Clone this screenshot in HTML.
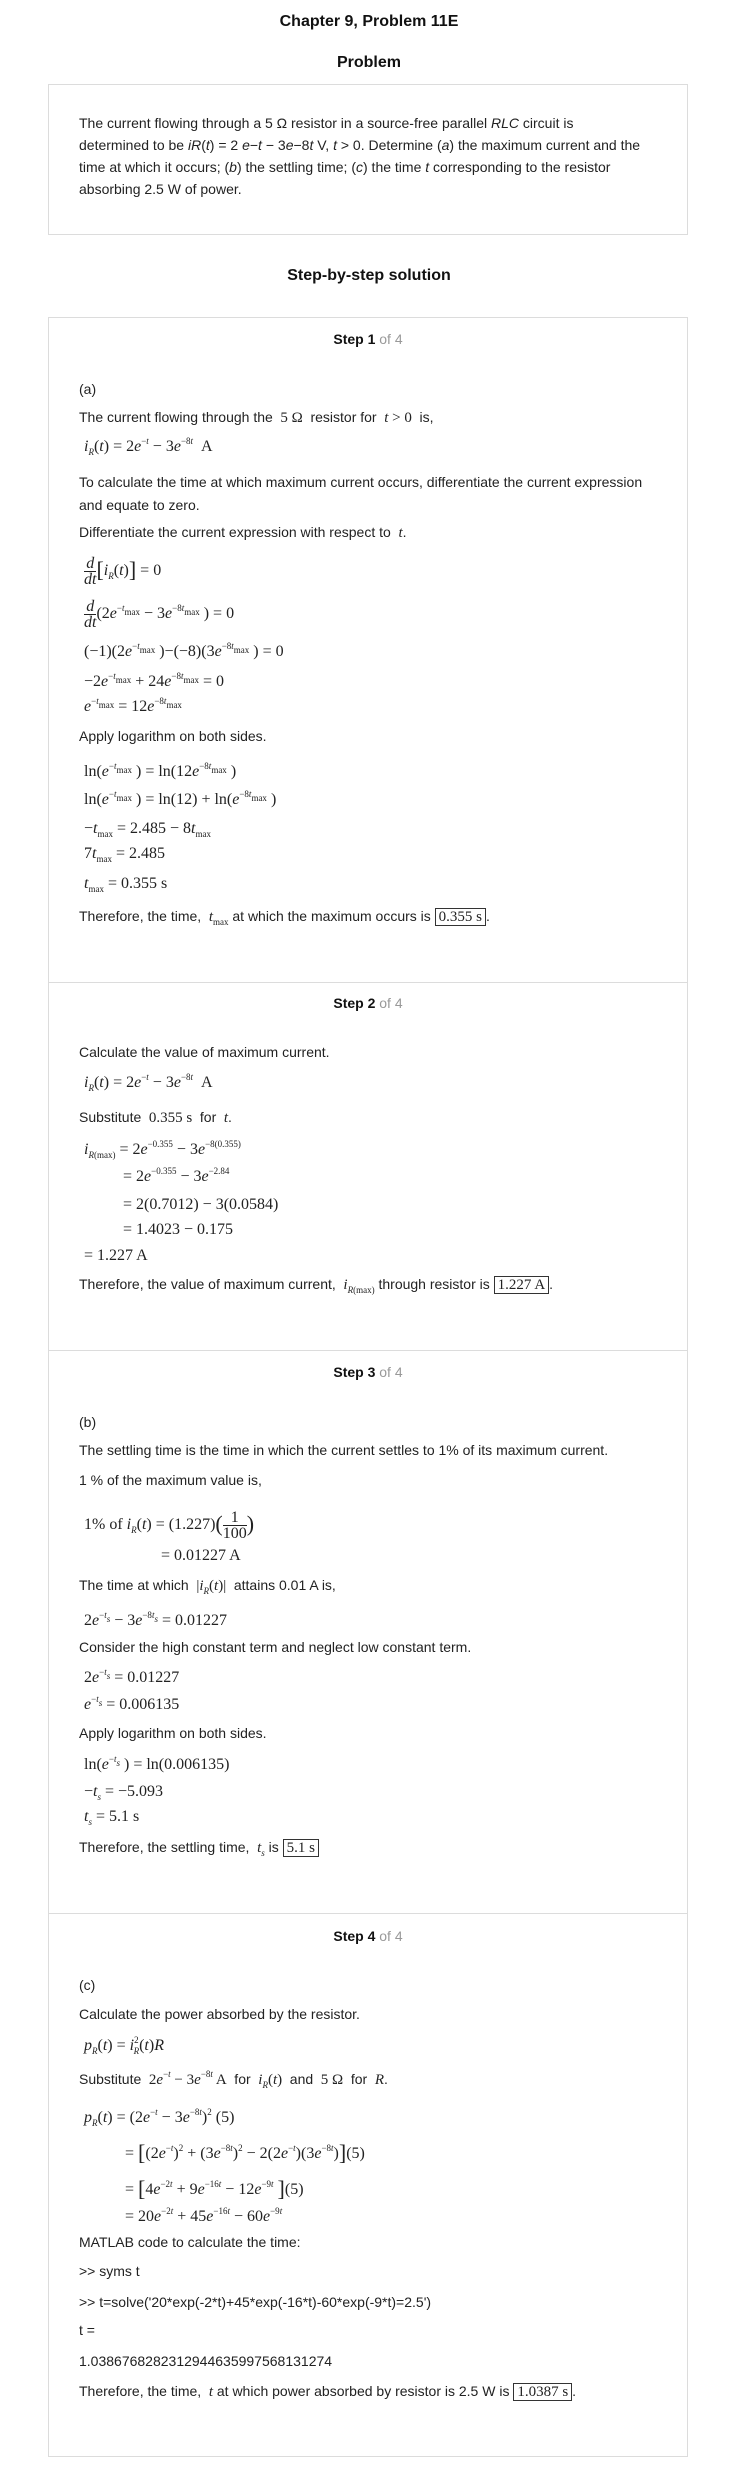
<!DOCTYPE html>
<html><head><meta charset="utf-8">
<style>
*{margin:0;padding:0;box-sizing:border-box}
body{width:738px;height:2483px;background:#fff;position:relative;font-family:"Liberation Sans",Arial,sans-serif;color:#222;overflow:hidden}
.c{position:absolute;left:0;width:738px;text-align:center;font-weight:bold;font-size:16px;line-height:20px;color:#111}
.box{position:absolute;left:48px;width:640px;border:1px solid #dcdcdc}
.l{position:absolute;left:79px;white-space:nowrap;font-size:14px;line-height:20px;color:#222}
.m{position:absolute;left:84px;white-space:nowrap;font-family:"Liberation Serif",serif;font-size:16px;line-height:22px;color:#222}
.s{font-family:"Liberation Serif",serif;font-size:15px}
i{font-style:italic}
sup{font-size:9px;vertical-align:7px;line-height:0}
sub{font-size:9px;vertical-align:-4px;line-height:0}
.fr{display:inline-block;vertical-align:middle;text-align:center;font-style:italic;line-height:15px}
.fr span{display:block}
.fr span.t{border-bottom:1px solid #222}
.bx{border:1px solid #333;padding:0 3px;font-family:"Liberation Serif",serif;font-size:15px}
.st{position:absolute;left:48px;width:640px;text-align:center;font-size:14px;line-height:20px;font-weight:bold;color:#111}
.st span{font-weight:normal;color:#999}
.big{font-size:22px;vertical-align:-2px}
</style></head><body>

<div class="c" style="top:12px">Chapter 9, Problem 11E</div>
<div class="c" style="top:53px">Problem</div>
<div class="box" style="top:84px;height:151px"></div>
<div class="l" style="top:112px;line-height:22px">The current flowing through a 5 Ω resistor in a source-free parallel <i>RLC</i> circuit is<br>determined to be <i>iR</i>(<i>t</i>) = 2 <i>e</i>−<i>t</i> − 3<i>e</i>−8<i>t</i> V, <i>t</i> &gt; 0. Determine (<i>a</i>) the maximum current and the<br>time at which it occurs; (<i>b</i>) the settling time; (<i>c</i>) the time <i>t</i> corresponding to the resistor<br>absorbing 2.5 W of power.</div>

<div class="c" style="top:266px">Step-by-step solution</div>

<!-- Step 1 -->
<div class="box" style="top:317px;height:666px"></div>
<div class="st" style="top:329px">Step 1 <span>of 4</span></div>
<div class="l" style="top:379px">(a)</div>
<div class="l" style="top:407px">The current flowing through the <span class="s">&nbsp;5 Ω&nbsp;</span> resistor for <span class="s"><i>&nbsp;t</i> &gt; 0&nbsp;</span> is,</div>
<div class="m" style="top:436px"><i>i<sub>R</sub></i>(<i>t</i>) = 2<i>e</i><sup>−<i>t</i></sup> − 3<i>e</i><sup>−8<i>t</i></sup> &nbsp;A</div>
<div class="l" style="top:471px;line-height:23px">To calculate the time at which maximum current occurs, differentiate the current expression<br>and equate to zero.</div>
<div class="l" style="top:522px">Differentiate the current expression with respect to <span class="s"><i>&nbsp;t</i></span>.</div>
<div class="m" style="top:556px"><span class="fr"><span class="t">d</span><span>dt</span></span><span class="big">[</span><i>i<sub>R</sub></i>(<i>t</i>)<span class="big">]</span> = 0</div>
<div class="m" style="top:599px"><span class="fr"><span class="t">d</span><span>dt</span></span>(2<i>e</i><sup>−<i>t</i><sub>max</sub></sup> − 3<i>e</i><sup>−8<i>t</i><sub>max</sub></sup> ) = 0</div>
<div class="m" style="top:641px">(−1)(2<i>e</i><sup>−<i>t</i><sub>max</sub></sup> )−(−8)(3<i>e</i><sup>−8<i>t</i><sub>max</sub></sup> ) = 0</div>
<div class="m" style="top:671px">−2<i>e</i><sup>−<i>t</i><sub>max</sub></sup> + 24<i>e</i><sup>−8<i>t</i><sub>max</sub></sup> = 0</div>
<div class="m" style="top:696px"><i>e</i><sup>−<i>t</i><sub>max</sub></sup> = 12<i>e</i><sup>−8<i>t</i><sub>max</sub></sup></div>
<div class="l" style="top:726px">Apply logarithm on both sides.</div>
<div class="m" style="top:761px">ln(<i>e</i><sup>−<i>t</i><sub>max</sub></sup> ) = ln(12<i>e</i><sup>−8<i>t</i><sub>max</sub></sup> )</div>
<div class="m" style="top:789px">ln(<i>e</i><sup>−<i>t</i><sub>max</sub></sup> ) = ln(12) + ln(<i>e</i><sup>−8<i>t</i><sub>max</sub></sup> )</div>
<div class="m" style="top:818px">−<i>t</i><sub>max</sub> = 2.485 − 8<i>t</i><sub>max</sub></div>
<div class="m" style="top:843px">7<i>t</i><sub>max</sub> = 2.485</div>
<div class="m" style="top:873px"><i>t</i><sub>max</sub> = 0.355 s</div>
<div class="l" style="top:906px">Therefore, the time, <span class="s"><i>&nbsp;t</i><sub>max</sub></span> at which the maximum occurs is <span class="bx">0.355 s</span>.</div>

<!-- Step 2 -->
<div class="box" style="top:982px;height:369px"></div>
<div class="st" style="top:993px">Step 2 <span>of 4</span></div>
<div class="l" style="top:1042px">Calculate the value of maximum current.</div>
<div class="m" style="top:1072px"><i>i<sub>R</sub></i>(<i>t</i>) = 2<i>e</i><sup>−<i>t</i></sup> − 3<i>e</i><sup>−8<i>t</i></sup> &nbsp;A</div>
<div class="l" style="top:1107px">Substitute <span class="s">&nbsp;0.355 s&nbsp;</span> for <span class="s"><i>&nbsp;t</i></span>.</div>
<div class="m" style="top:1139px"><i>i</i><sub><i>R</i>(max)</sub> = 2<i>e</i><sup>−0.355</sup> − 3<i>e</i><sup>−8(0.355)</sup></div>
<div class="m" style="top:1166px;left:123px">= 2<i>e</i><sup>−0.355</sup> − 3<i>e</i><sup>−2.84</sup></div>
<div class="m" style="top:1194px;left:123px">= 2(0.7012) − 3(0.0584)</div>
<div class="m" style="top:1219px;left:123px">= 1.4023 − 0.175</div>
<div class="m" style="top:1245px">= 1.227 A</div>
<div class="l" style="top:1274px">Therefore, the value of maximum current, <span class="s"><i>&nbsp;i</i><sub><i>R</i>(max)</sub></span> through resistor is <span class="bx">1.227 A</span>.</div>

<!-- Step 3 -->
<div class="box" style="top:1350px;height:564px"></div>
<div class="st" style="top:1362px">Step 3 <span>of 4</span></div>
<div class="l" style="top:1412px">(b)</div>
<div class="l" style="top:1440px">The settling time is the time in which the current settles to 1% of its maximum current.</div>
<div class="l" style="top:1470px">1 % of the maximum value is,</div>
<div class="m" style="top:1510px">1% of <i>i<sub>R</sub></i>(<i>t</i>) = (1.227)<span class="big">(</span><span class="fr" style="font-style:normal"><span class="t">1</span><span>100</span></span><span class="big">)</span></div>
<div class="m" style="top:1545px;left:161px">= 0.01227 A</div>
<div class="l" style="top:1575px">The time at which <span class="s">&nbsp;|<i>i<sub>R</sub></i>(<i>t</i>)|&nbsp;</span> attains 0.01 A is,</div>
<div class="m" style="top:1610px">2<i>e</i><sup>−<i>t<sub>s</sub></i></sup> − 3<i>e</i><sup>−8<i>t<sub>s</sub></i></sup> = 0.01227</div>
<div class="l" style="top:1637px">Consider the high constant term and neglect low constant term.</div>
<div class="m" style="top:1667px">2<i>e</i><sup>−<i>t<sub>s</sub></i></sup> = 0.01227</div>
<div class="m" style="top:1694px"><i>e</i><sup>−<i>t<sub>s</sub></i></sup> = 0.006135</div>
<div class="l" style="top:1723px">Apply logarithm on both sides.</div>
<div class="m" style="top:1754px">ln(<i>e</i><sup>−<i>t<sub>s</sub></i></sup> ) = ln(0.006135)</div>
<div class="m" style="top:1781px">−<i>t<sub>s</sub></i> = −5.093</div>
<div class="m" style="top:1806px"><i>t<sub>s</sub></i> = 5.1 s</div>
<div class="l" style="top:1837px">Therefore, the settling time, <span class="s"><i>&nbsp;t<sub>s</sub></i></span> is <span class="bx">5.1 s</span></div>

<!-- Step 4 -->
<div class="box" style="top:1913px;height:544px"></div>
<div class="st" style="top:1926px">Step 4 <span>of 4</span></div>
<div class="l" style="top:1975px">(c)</div>
<div class="l" style="top:2004px">Calculate the power absorbed by the resistor.</div>
<div class="m" style="top:2035px"><i>p<sub>R</sub></i>(<i>t</i>) = <i>i</i><sup>2</sup><sub style="margin-left:-5px"><i>R</i></sub>(<i>t</i>)<i>R</i></div>
<div class="l" style="top:2069px">Substitute <span class="s">&nbsp;2<i>e</i><sup>−<i>t</i></sup> − 3<i>e</i><sup>−8<i>t</i></sup> A&nbsp;</span> for <span class="s">&nbsp;<i>i<sub>R</sub></i>(<i>t</i>)&nbsp;</span> and <span class="s">&nbsp;5 Ω&nbsp;</span> for <span class="s"><i>&nbsp;R</i></span>.</div>
<div class="m" style="top:2107px"><i>p<sub>R</sub></i>(<i>t</i>) = (2<i>e</i><sup>−<i>t</i></sup> − 3<i>e</i><sup>−8<i>t</i></sup>)<sup>2</sup> (5)</div>
<div class="m" style="top:2142px;left:125px">= <span class="big">[</span>(2<i>e</i><sup>−<i>t</i></sup>)<sup>2</sup> + (3<i>e</i><sup>−8<i>t</i></sup>)<sup>2</sup> − 2(2<i>e</i><sup>−<i>t</i></sup>)(3<i>e</i><sup>−8<i>t</i></sup>)<span class="big">]</span>(5)</div>
<div class="m" style="top:2178px;left:125px">= <span class="big">[</span>4<i>e</i><sup>−2<i>t</i></sup> + 9<i>e</i><sup>−16<i>t</i></sup> − 12<i>e</i><sup>−9<i>t</i></sup> <span class="big">]</span>(5)</div>
<div class="m" style="top:2206px;left:125px">= 20<i>e</i><sup>−2<i>t</i></sup> + 45<i>e</i><sup>−16<i>t</i></sup> − 60<i>e</i><sup>−9<i>t</i></sup></div>
<div class="l" style="top:2232px">MATLAB code to calculate the time:</div>
<div class="l" style="top:2261px">&gt;&gt; syms t</div>
<div class="l" style="top:2292px">&gt;&gt; t=solve('20*exp(-2*t)+45*exp(-16*t)-60*exp(-9*t)=2.5')</div>
<div class="l" style="top:2320px">t =</div>
<div class="l" style="top:2351px">1.0386768282312944635997568131274</div>
<div class="l" style="top:2381px">Therefore, the time, <span class="s"><i>&nbsp;t</i></span> at which power absorbed by resistor is 2.5 W is <span class="bx">1.0387 s</span>.</div>

</body></html>
